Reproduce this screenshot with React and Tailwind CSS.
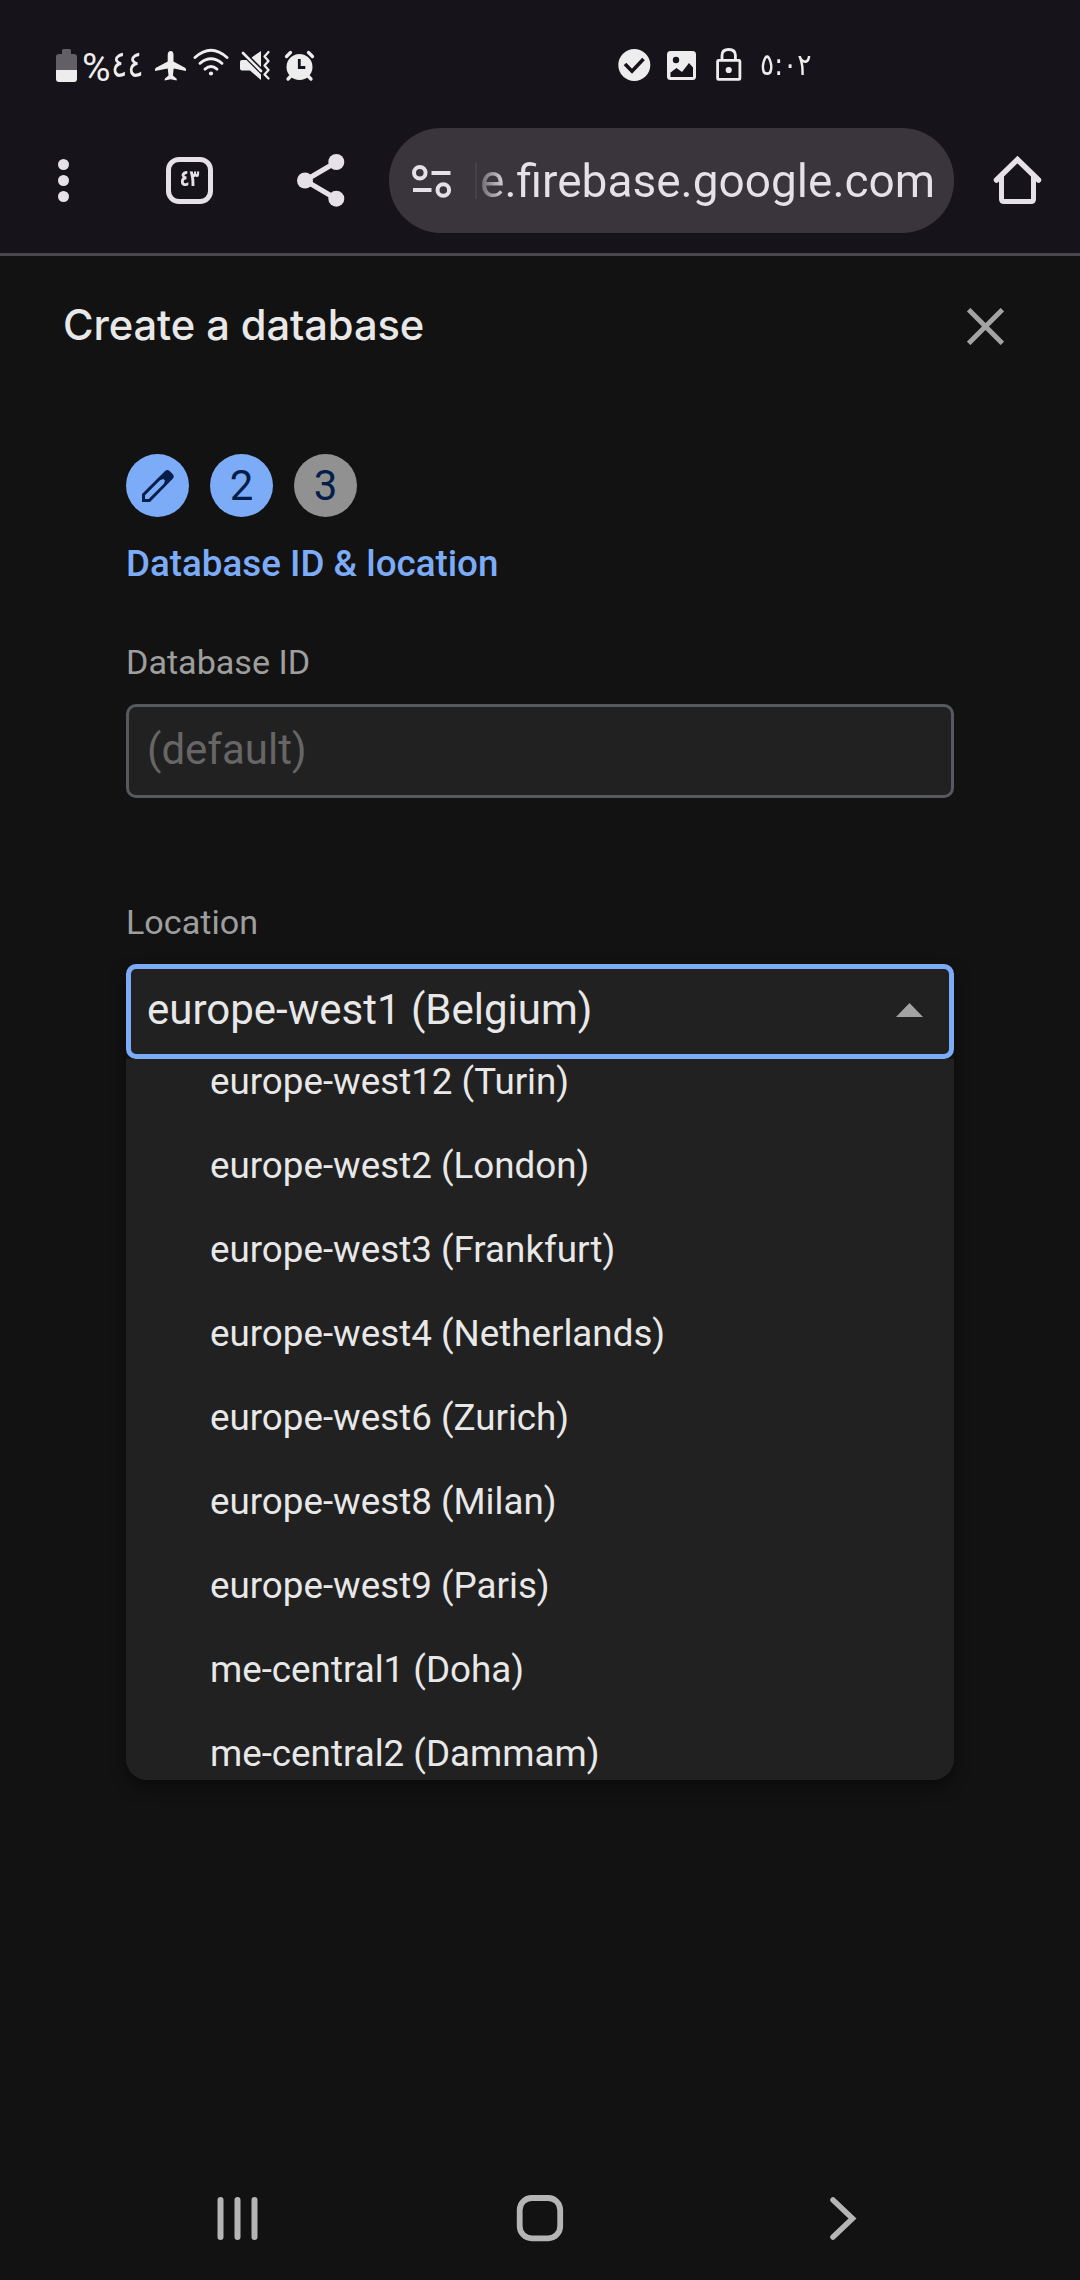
import React from "react";

const locations = [
  "europe-west12 (Turin)",
  "europe-west2 (London)",
  "europe-west3 (Frankfurt)",
  "europe-west4 (Netherlands)",
  "europe-west6 (Zurich)",
  "europe-west8 (Milan)",
  "europe-west9 (Paris)",
  "me-central1 (Doha)",
  "me-central2 (Dammam)",
];

function StatusBar() {
  return (
    <div className="flex h-[128px] items-start pt-[44px] text-[#ededed]">
      <svg className="ml-[54px] h-[42px] w-[26px] shrink-0" viewBox="54 44 26 42" fill="currentColor">
        <path d="M62 54v-3.500q0-1.500 1.500-1.500h6q1.500 0 1.500 1.500v3.500h3q3 0 3 3v13H56V57q0-3 3-3z" fill="#625f66" />
        <path d="M56 70h21v9q0 3-3 3H59q-3 0-3-3z" />
      </svg>
      <span className="ml-[2px] w-[29px] shrink-0 text-[39px] leading-[48px]">%</span>
      <span className="w-[41px] shrink-0 origin-left scale-x-95 scale-y-115 font-['DejaVu_Sans',sans-serif] text-[32px] leading-[40px] tracking-[-1px]">٤٤</span>
      <svg className="h-[42px] w-[168px] shrink-0" viewBox="152 44 168 42" fill="currentColor">
        <path d="M170.700 51q2.800 0 2.800 4v6.500l11.500 6.300q1 .7 1 2v1.200l-12.300-2.500-.8 7 3.800 3.300V80.500l-6-1.300-6 1.300v-1.700l3.800-3.300-.8-7L155 71v-1.200q0-1.300 1-2l11.700-6.300V55q0-4 3-4z" />
        <g fill="none" stroke="currentColor" strokeWidth="2.900" strokeLinecap="round">
          <path d="M195 57.500q16-14.500 32 0" />
          <path d="M200 63.300q11-9 22 0" />
          <path d="M205 69.100q6-5 12 0" />
        </g>
        <circle cx="211" cy="73.500" r="2.100" />
        <path d="M240 62q0-2 2-2h4.500L261 74.500V80l-11-9.500h-8q-2 0-2-2zM251.500 57.500L261 51v16z" />
        <path d="M243 53l18 18" stroke="currentColor" strokeWidth="2.600" strokeLinecap="round" />
        <path d="M268.500 52l-4 4.500 4 4.500-4 4.500 4 4.500-4 4.500 4 4" fill="none" stroke="currentColor" strokeWidth="2.300" strokeLinecap="round" strokeLinejoin="round" />
        <circle cx="299.500" cy="67" r="13" />
        <path d="M286.500 56.500l4-4M312.500 56.500l-4-4M291 76l-3 3M308 76l3 3" stroke="currentColor" strokeWidth="3.300" strokeLinecap="round" />
        <path d="M299.300 59v8.500h6" fill="none" stroke="#16131a" strokeWidth="2.800" />
      </svg>
      <svg className="ml-[292px] h-[42px] w-[136px] shrink-0" viewBox="612 44 136 42" fill="currentColor">
        <circle cx="634.300" cy="65" r="16" />
        <path d="M625 64l7 7.200L643.500 59" fill="none" stroke="#16131a" strokeWidth="3.600" />
        <rect x="667" y="51" width="29" height="29" rx="3.500" />
        <g fill="#16131a">
          <circle cx="676" cy="60" r="3.200" />
          <path d="M670.500 72.500l6-4.500 5.500 4L689 63l4 4.500V77h-22.500z" />
        </g>
        <g fill="none" stroke="currentColor" strokeWidth="2.800">
          <rect x="717.600" y="60.400" width="22.300" height="19" rx="1" />
          <path d="M722 60v-4.500q0-6 6.700-6t6.700 6V60" />
        </g>
        <circle cx="728.700" cy="70" r="3.100" />
      </svg>
      <span dir="ltr" className="ml-[12px] origin-left scale-x-[0.88] font-['DejaVu_Sans',sans-serif] text-[30px] leading-[42px]">٥:٠٢</span>
    </div>
  );
}

function BrowserBar() {
  return (
    <div className="flex h-[128px] items-start border-b-[3px] border-[#4a464d] text-[#e6e1e6]">
      <svg className="ml-[54px] h-[105px] w-5 shrink-0" viewBox="54 128 20 105" fill="currentColor">
        <circle cx="63.500" cy="164.500" r="5.500" />
        <circle cx="63.500" cy="180.500" r="5.500" />
        <circle cx="63.500" cy="196.500" r="5.500" />
      </svg>
      <div className="mt-[29px] ml-[92px] flex h-[47px] w-[47px] shrink-0 items-center justify-center rounded-[13px] border-[5px] border-current">
        <span className="scale-x-85 scale-y-120 pb-[4px] font-['DejaVu_Sans',sans-serif] text-[19px] leading-none font-bold">٤٣</span>
      </div>
      <svg className="ml-[81px] h-[105px] w-[54px] shrink-0" viewBox="294 128 54 105" fill="currentColor">
        <path d="M336.500 162L305 180.500l31.500 18.500" fill="none" stroke="currentColor" strokeWidth="5" />
        <circle cx="305" cy="180.500" r="8" />
        <circle cx="336.300" cy="162" r="8" />
        <circle cx="336.300" cy="198.700" r="8" />
      </svg>
      <div className="ml-[41px] flex h-[105px] w-[565px] shrink-0 items-center overflow-hidden rounded-[52px] bg-[#3a343d]">
        <svg className="ml-[21px] h-[40px] w-[44px] shrink-0" viewBox="410 160 44 40" fill="none" stroke="currentColor" strokeWidth="4">
          <circle cx="419.800" cy="171.800" r="5.800" />
          <path d="M431.500 172h19M413 189h18.500" />
          <circle cx="443.300" cy="189" r="5.800" />
        </svg>
        <span className="ml-[21px] h-[36px] w-[2px] shrink-0 bg-[#464048]" />
        <span className="ml-[3px] bg-linear-to-r from-[#6d6870] from-0% via-[#e6e1e6] via-6% to-[#e6e1e6] bg-clip-text text-[46px] leading-[60px] whitespace-nowrap text-transparent">e.firebase.google.com</span>
      </div>
      <svg className="ml-[37px] h-[105px] w-[54px] shrink-0" viewBox="991 128 54 105" fill="none" stroke="currentColor" strokeWidth="5" strokeLinecap="round">
        <path d="M996.500 180l21-20.500 21 20.500" strokeWidth="5.500" />
        <path d="M1001.500 177v22q0 2.500 2.500 2.500h27q2.500 0 2.500-2.500v-22" />
      </svg>
    </div>
  );
}

function Steps() {
  return (
    <div className="flex gap-[21px] text-[42px] leading-none text-[#041e49]">
      <span className="flex h-[63px] w-[63px] items-center justify-center rounded-full bg-[#7cacf8]">
        <svg className="h-[32px] w-[32px]" viewBox="0 0 32 32" fill="currentColor">
          <path fillRule="evenodd" d="M0 32v-8L22.800 1.200q2.700-2.200 5 0l2.600 2.600q2.500 2.500.3 5L8 32zM3 25.300v3.700h3.700L21.700 14l1.300-3.300-1.700-1.700-3.300 1.300z" />
        </svg>
      </span>
      <span className="flex h-[63px] w-[63px] items-center justify-center rounded-full bg-[#7cacf8]">2</span>
      <span className="flex h-[63px] w-[63px] items-center justify-center rounded-full bg-[#919191]">3</span>
    </div>
  );
}

function NavBar() {
  return (
    <div className="mt-auto flex h-[126px] items-start justify-between px-[214px] pt-[38px]">
      <svg className="h-[52px] w-[48px]" viewBox="214 2192 48 52" stroke="#b5b5b5" strokeWidth="6" strokeLinecap="round">
        <path d="M220.500 2200v37M237.500 2200v37M254.500 2200v37" />
      </svg>
      <svg className="h-[52px] w-[52px]" viewBox="514 2192 52 52" fill="none" stroke="#b5b5b5" strokeWidth="5.800">
        <rect x="519.700" y="2198" width="40.500" height="40.300" rx="12" />
      </svg>
      <svg className="h-[52px] w-[48px]" viewBox="818 2192 48 52" fill="none" stroke="#b5b5b5" strokeWidth="5.500" strokeLinecap="round">
        <path d="M833 2200l19.500 18.500-19.500 18.500" />
      </svg>
    </div>
  );
}

export default function App() {
  return (
    <div className="flex h-[2280px] w-[1080px] flex-col overflow-hidden bg-[#121212] font-[Roboto,sans-serif]">
      <header className="bg-[#16131a]">
        <StatusBar />
        <BrowserBar />
      </header>

      <div className="flex h-[140px] items-center justify-between pr-[76px] pl-[63px]">
        <h1 className="pb-[2px] font-[Inter,sans-serif] text-[41.700px] leading-[60px] font-medium tracking-[-0.100px] text-[#e8e8e8]">Create a database</h1>
        <svg className="h-[37px] w-[37px]" viewBox="0 0 36 36" stroke="#a3a3a3" strokeWidth="4.800">
          <path d="M1.600 1.600l32.800 32.800M34.400 1.600L1.600 34.400" />
        </svg>
      </div>

      <main className="px-[126px] pt-[58px]">
        <Steps />
        <p className="mt-[21px] text-[36.750px] leading-[52px] font-medium text-[#7cacf8]">Database ID &amp; location</p>

        <p className="mt-[52px] text-[34.125px] leading-[40px] text-[#9e9e9e]">Database ID</p>
        <div className="mt-[22px] flex h-[94px] items-center rounded-[10px] border-[3px] border-[#565a5f] bg-[#212121] pb-[2px] pl-[18px] text-[42px] leading-none text-[#666666]">(default)</div>

        <p className="mt-[104px] text-[34.125px] leading-[40px] text-[#9e9e9e]">Location</p>
        <div className="mt-[22px] rounded-b-[21px] shadow-[0_8px_16px_rgba(0,0,0,0.4)]">
          <div className="flex h-[95px] items-center justify-between rounded-[10px] border-[5px] border-[#7cacf8] bg-[#212121] pr-[26px] pb-[3px] pl-[16px] text-[42px] leading-none text-[#e8e8e8]">
            <span>europe-west1 (Belgium)</span>
            <svg className="h-[14px] w-[27px]" viewBox="0 0 27 14" fill="#a3a3a3">
              <path d="M13.500 0L27 14H0z" />
            </svg>
          </div>
          <ul className="h-[721px] overflow-hidden rounded-b-[21px] bg-[#212121] text-[36.750px] text-[#e8e8e8]">
            {locations.map((name, i) => (
              <li key={name} className={i === 0 ? "-mt-[19px] h-[84px] pl-[84px] leading-[84px]" : "h-[84px] pl-[84px] leading-[84px]"}>
                {name}
              </li>
            ))}
          </ul>
        </div>
      </main>

      <NavBar />
    </div>
  );
}
